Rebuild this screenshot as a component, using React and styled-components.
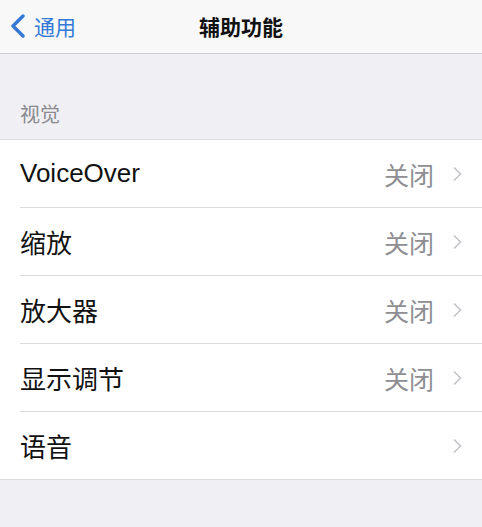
import React from "react";
import styled, { createGlobalStyle } from "styled-components";

const GlobalStyle = createGlobalStyle`
    html, body {
        margin: 0;
        padding: 0;
        background-color: #efeff4;
        font-family: "Liberation Sans", "Noto Sans CJK SC", sans-serif;
    }
`;

const Page = styled.div`
    width: 482px;
    height: 527px;
    background-color: #efeff4;
    overflow: hidden;
`;

const NavBar = styled.div`
    height: 53px;
    display: grid;
    grid-template-columns: 1fr auto 1fr;
    align-items: center;
    background-color: #f8f8f8;
    border-bottom: 1px solid #cfcfd3;
`;

const BackButton = styled.div`
    display: flex;
    align-items: center;
    gap: 7px;
    padding-left: 9px;
    color: #3479d6;
    font-size: 21px;
    padding-bottom: 1px;
`;

const NavTitle = styled.div`
    font-size: 21px;
    font-weight: 600;
    color: #111;
    padding-bottom: 1px;
`;

const SectionHeader = styled.div`
    height: 85px;
    display: flex;
    align-items: flex-end;
    padding: 0 0 11px 20px;
    box-sizing: border-box;
    font-size: 20px;
    color: #8a8a8f;
`;

const List = styled.div`
    background-color: #fff;
    border-top: 1px solid #dcdcdf;
    border-bottom: 1px solid #dcdcdf;
`;

const Row = styled.div`
    height: 67px;
    display: flex;
    align-items: center;
    padding-left: 20px;
    border-bottom: ${(p) => (p.last ? "none" : "1px solid transparent")};
    position: relative;

    &::after {
        content: "";
        display: ${(p) => (p.last ? "none" : "block")};
        position: absolute;
        left: 20px;
        right: 0;
        bottom: -1px;
        height: 1px;
        background-color: #dcdcdf;
    }
`;

const Label = styled.div`
    flex: 1;
    font-size: 26px;
    color: #111;
`;

const Value = styled.div`
    font-size: 25px;
    color: #8e8e93;
    margin-right: 18px;
`;

const Disclosure = styled.div`
    width: 10px;
    display: flex;
    margin-right: 20px;
`;

const Chevron = () => (
    <svg width="10" height="16" viewBox="0 0 10 16">
        <path d="M2 1.5 L8.5 8 L2 14.5" fill="none" stroke="#c4c4c8" strokeWidth="1.6" />
    </svg>
);

const BackChevron = () => (
    <svg width="18" height="24" viewBox="0 0 18 24">
        <path d="M14 2 L4 12 L14 22" fill="none" stroke="#3479d6" strokeWidth="3.4" strokeLinecap="round" strokeLinejoin="round" />
    </svg>
);

const items = [
    { label: "VoiceOver", value: "关闭" },
    { label: "缩放", value: "关闭" },
    { label: "放大器", value: "关闭" },
    { label: "显示调节", value: "关闭" },
    { label: "语音", value: "" },
];

const App = () => {
    return (
        <Page>
            <GlobalStyle />
            <NavBar>
                <BackButton>
                    <BackChevron />
                    通用
                </BackButton>
                <NavTitle>辅助功能</NavTitle>
                <div />
            </NavBar>
            <SectionHeader>视觉</SectionHeader>
            <List>
                {items.map((item, i) => (
                    <Row key={item.label} last={i === items.length - 1}>
                        <Label>{item.label}</Label>
                        {item.value && <Value>{item.value}</Value>}
                        <Disclosure>
                            <Chevron />
                        </Disclosure>
                    </Row>
                ))}
            </List>
        </Page>
    );
};

export default App;
